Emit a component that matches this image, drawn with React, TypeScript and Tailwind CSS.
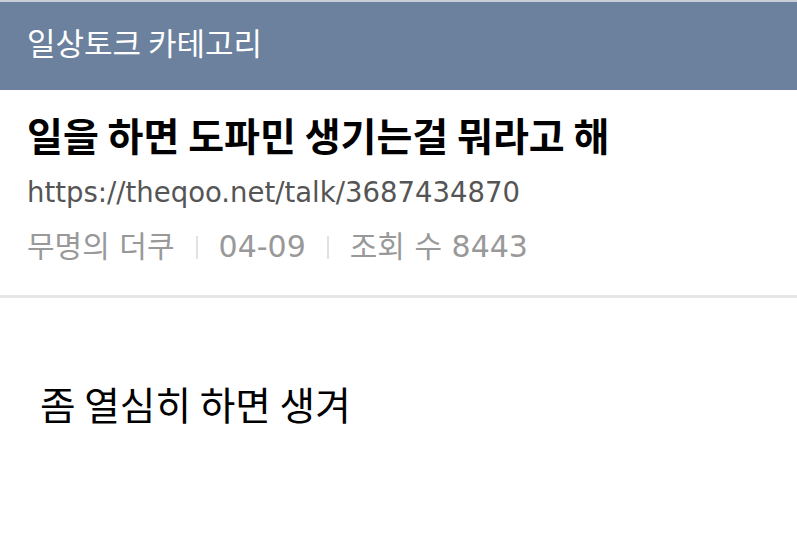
export default function App() {
  const cjk = { fontFamily: '"Noto Sans CJK KR", "Noto Sans", sans-serif' };
  const latin = { fontFamily: '"DejaVu Sans", "Noto Sans CJK KR", sans-serif' };
  return (
    <div className="w-[797px] h-[560px] bg-white overflow-hidden" style={cjk}>
      {/* Category header */}
      <div className="border-t-2 border-[#c9ced6] h-[90px] bg-[#6b819e] flex items-center px-[27px] pb-[8px]">
        <span className="text-[31px] leading-[40px] text-white">일상토크 카테고리</span>
      </div>

      {/* Post head */}
      <div className="px-[27px] pt-[22px] pb-[30px] border-b-[3px] border-[#e6e6e6]">
        <h1 className="text-[39px] leading-[44px] font-bold text-black">
          일을 하면 도파민 생기는걸 뭐라고 해
        </h1>
        <div className="mt-[18px] text-[27.5px] leading-[36px] text-[#555]" style={latin}>
          https://theqoo.net/talk/3687434870
        </div>
        <div className="mt-[19px] flex items-center text-[30px] leading-[36px] text-[#999]" style={latin}>
          <span>무명의 더쿠</span>
          <span className="mx-[21px] w-[2px] h-[23px] bg-[#e2e2e2]" />
          <span>04-09</span>
          <span className="mx-[21px] w-[2px] h-[23px] bg-[#e2e2e2]" />
          <span>조회 수 8443</span>
        </div>
      </div>

      {/* Body */}
      <div className="pt-[83px] px-[40px]">
        <p className="text-[38.7px] leading-[44px] text-black">좀 열심히 하면 생겨</p>
      </div>
    </div>
  );
}
